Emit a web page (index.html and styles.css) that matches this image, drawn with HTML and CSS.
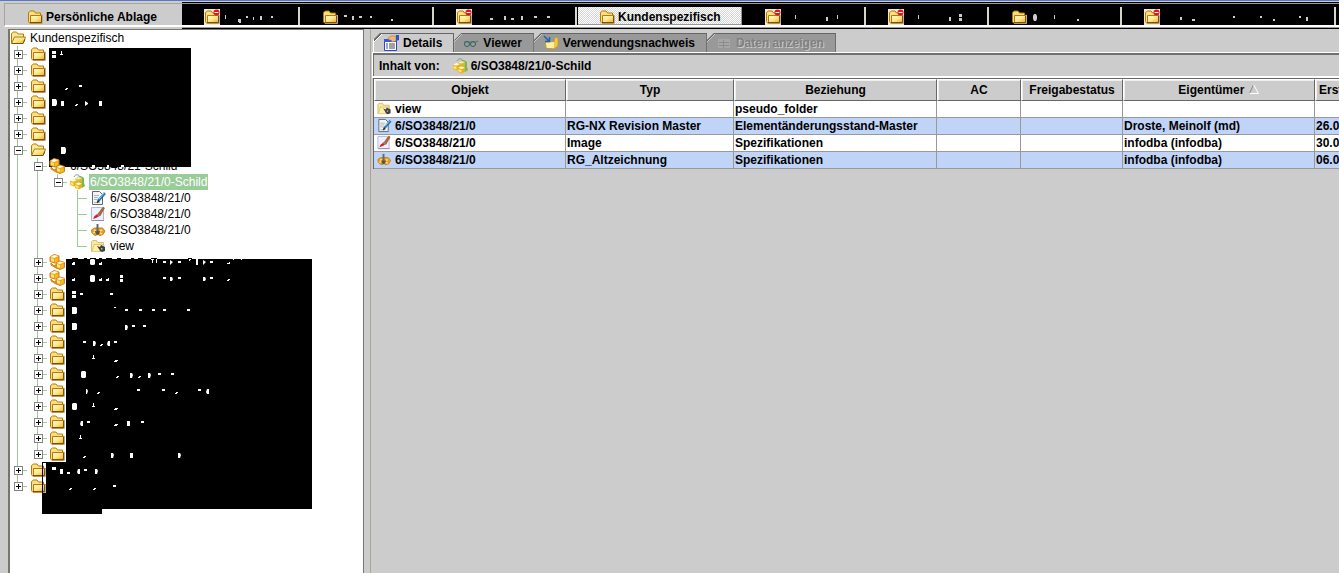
FILE: index.html
```
<!DOCTYPE html>
<html lang="de">
	<head>
		<meta charset="UTF-8">
		<title>Kundenspezifisch</title>
		<link rel="stylesheet" href="styles.css">
	</head>
	<body>
		<!-- Icons -->
		<svg class="defs" aria-hidden="true">
			<defs>
				<linearGradient id="gold" x1="0" y1="0" x2="1" y2="1">
					<stop offset="0" stop-color="#fffbd0"/>
					<stop offset="0.5" stop-color="#ffe890"/>
					<stop offset="1" stop-color="#e8ac28"/>
				</linearGradient>
			</defs>
			<symbol id="folder" viewBox="0 0 16 16">
				<path d="M3 14.5h12.5V6" fill="none" stroke="#b8b0a0"/>
				<path d="M1.500 12.500v-9l2-1.500h3.500l1.500 2h5v2h1v8h-12z" fill="#ffe080" stroke="#b87808"/>
				<path d="M3.500 6.500h11v7h-11z" fill="url(#gold)" stroke="#b87808"/>
				<path d="M3 13.500h11.500V7" fill="none" stroke="#805000"/>
			</symbol>
			<symbol id="open" viewBox="0 0 16 16">
				<path d="M1.500 13.500v-10l2-1.500h3l1.500 2h5.500v3" fill="#ffe890" stroke="#b87808"/>
				<path d="M1.500 13.500l3-6.500h11l-2.500 6.500z" fill="url(#gold)" stroke="#b87808"/>
				<path d="M2 13.500h11l2-4" fill="none" stroke="#805000"/>
			</symbol>
			<symbol id="busy" viewBox="0 0 16 16">
				<rect width="16" height="16" fill="#f0ead8"/>
				<use href="#folder"/>
				<circle cx="12.500" cy="3.500" r="3" fill="#e81020"/>
				<path d="M10.500 3.500h4" stroke="#fff"/>
			</symbol>
			<symbol id="cubes" viewBox="0 0 16 16">
				<path d="M1 3l4-2.500 5 1.500v5l-4 2-5-1.500zM7 9l4-2 4.500 1.500v5l-4.500 2-4-1.500zM2 9l3 3 2-1v3l-5-3z" fill="#f0a020" stroke="#d88020"/>
				<path d="M1.500 3l3.500-2 4.500 1-4 2zM7.500 9l3.500-1.500 4 1-4 1.500z" fill="#fffbd8"/>
				<path d="M2 4l3 1v3l-3-1zM8 10l3 1v3l-3-1z" fill="#ffe878"/>
				<path d="M6 5l3-1v3l-3 1.500zM11.500 11l3-1v3l-3 1.500z" fill="#ffc000"/>
			</symbol>
			<symbol id="rev" viewBox="0 0 16 16">
				<path d="M8 3l4-1 3 2v5l1 3-3 2-5-6z" fill="#78b850"/>
				<path d="M5 3c1-3 5-3 6 0" fill="none" stroke="#8098a0"/>
				<path d="M6 5l3-2 4 1v4l-3 2-4-1z" fill="#d8b830"/>
				<path d="M6 5l3-2 4 1-3 1.500z" fill="#e8f0b0"/>
				<path d="M1 7l3-2 4 1v5l-3 1.500-4-1.500zM6 10l3-1.500 4 1v4l-3 2-4-1.500z" fill="#e8b020"/>
				<path d="M1 7l3-2 4 1-3 1.500zM6 10l3-1.500 4 1-3 1.500z" fill="#fffde0"/>
				<path d="M1.500 8l3 .5v3l-3-1zM6.500 11l3 1v2.500l-3-1z" fill="#ffe868"/>
			</symbol>
			<symbol id="doc" viewBox="0 0 16 16">
				<path d="M2.500 1.500h7l3 3v10h-10z" fill="#f4f4f4" stroke="#606870"/>
				<path d="M4 5.500h5M4 7.500h4M4 9.500h3M4 12.500h6" stroke="#b0b4b8"/>
				<path d="M7 13l1-3.500 6-7 1.500 1.500-6 7z" fill="#2078c0" stroke="#104878" stroke-width=".5"/>
				<path d="M7 13l1-3 1.500 1.500z" fill="#222"/>
				<path d="M9 9l5-6" stroke="#90d0f8"/>
			</symbol>
			<symbol id="brush" viewBox="0 0 16 16">
				<path d="M1.500 1.500h10l2 2v11h-12z" fill="#eef0ff" stroke="#b0b8d8"/>
				<path d="M2 14.500h12" stroke="#8890b0"/>
				<path d="M8 8l5-7 1.500 1-4.500 8z" fill="#b86830" stroke="#703818" stroke-width=".5"/>
				<path d="M3 13l3-1 3.500-2-2-2-3 2z" fill="#d82018"/>
				<path d="M7 8l2.500 2" stroke="#888" stroke-width="1.500"/>
			</symbol>
			<symbol id="tool" viewBox="0 0 16 16">
				<path d="M1.500 8l3-2h8l2.500 3-2 3.500-3 1-2-1-3 1-3-2.500z" fill="#e8a020" stroke="#c88010"/>
				<path d="M4 8l2 1M3 11l2-1M12 8l-2 1M12 12l-2-1" stroke="#ffe080" stroke-width="1.500"/>
				<path d="M7.500 2v8" stroke="#606870" stroke-width="2"/>
				<path d="M5 9h5l-1 3-1.500 1-1.500-1z" fill="#605048"/>
			</symbol>
			<symbol id="view" viewBox="0 0 16 16">
				<path d="M1.500 13.500v-10l1-1h4l1 2h6v3" fill="#f8e8a0" stroke="#d8c070"/>
				<path d="M2 13.500l2-7h10l-1 7z" fill="#fff0a8" stroke="#c8b060" stroke-width=".6"/>
				<path d="M7 8l3 1 1-2 2 1 2 1v4l-3 1-2-1-1-2z" fill="#404040"/>
				<path d="M11 10h1.500v1.500H11z" fill="#bbb"/>
			</symbol>
			<symbol id="props" viewBox="0 0 16 16">
				<path d="M1.500 4.500h12v11h-12z" fill="#fff" stroke="#2848c8"/>
				<path d="M1 4h13v3H1z" fill="#3858d8"/>
				<path d="M3 9h2M3 11h2M3 13h2" stroke="#2848c8"/>
				<path d="M6 9h6M6 11h6M6 13h6" stroke="#444"/>
				<path d="M5 3l3-2 5 0v5l-4 1-1-2-2 0z" fill="#f0b878" stroke="#a06830" stroke-width=".5"/>
				<path d="M13 0h3v5l-3 1z" fill="#3050d0"/>
			</symbol>
			<symbol id="glasses" viewBox="0 0 16 16">
				<circle cx="4" cy="9" r="2.500" fill="#80a8a8" stroke="#405858"/>
				<circle cx="10" cy="9" r="2.500" fill="#80a8a8" stroke="#405858"/>
				<path d="M1 7h12l2-1" fill="none" stroke="#586868"/>
			</symbol>
			<symbol id="refs" viewBox="0 0 16 16">
				<path d="M2 6l9 1 1-5 3 1v8l-4 3-8-1z" fill="#f0c840" stroke="#c09020" stroke-width=".6"/>
				<path d="M3 8l8-1v6l-7 0z" fill="#fff0a0"/>
				<path d="M1 1l5 5M6.500 2v4.500H2" fill="none" stroke="#2060b8" stroke-width="1.500"/>
			</symbol>
			<symbol id="sheet" viewBox="0 0 16 16">
				<path d="M2 4h12v9H2z" fill="#a6a6a6"/>
				<path d="M3 7.500h10M3 10.500h10M7.500 5v8" stroke="#8c8c8c"/>
			</symbol>
		</svg>

		<div class="tabs">
			<button class="tab"><svg class="icon"><use href="#folder"/></svg>Persönliche Ablage</button>
			<div class="hidden-tabs">
				<button class="tab dark" aria-label="Ordner"><svg class="icon"><use href="#busy"/></svg><svg width="57" height="16" viewBox="223 9 57 16"><path d="M225 15h1v4h-1zM238 19h3v4h-2v-1h-1zM246 16h2v2h-2zM253 17h1v3h-1zM260 16h2v4h-2zM271 16h2v2h-2z"/></svg></button>
				<button class="tab dark" aria-label="Ordner"><svg class="icon"><use href="#folder"/></svg><svg width="73" height="16" viewBox="341 9 73 16"><path d="M344 15h3v2h-3zM352 16h2v4h-2zM359 16h3v2h-3zM370 16h2v2h-2zM391 19h2v2h-2z"/></svg></button>
				<button class="tab dark" aria-label="Ordner"><svg class="icon"><use href="#busy"/></svg><svg width="82" height="16" viewBox="475 9 82 16"><path d="M490 18h3v2h-3zM504 16h2v4h-2zM511 18h3v2h-3zM521 16h2v4h-2zM534 16h3v2h-3zM547 16h3v2h-3z"/></svg></button>
				<button class="tab current"><svg class="icon"><use href="#folder"/></svg>Kundenspezifisch</button>
				<button class="tab dark" aria-label="Ordner"><svg class="icon"><use href="#busy"/></svg><svg width="62" height="16" viewBox="784 9 62 16"><path d="M795 15h1v4h-1zM826 17h2v4h-2zM837 15h1v4h-1z"/></svg></button>
				<button class="tab dark" aria-label="Ordner"><svg class="icon"><use href="#busy"/></svg><svg width="62" height="16" viewBox="907 9 62 16"><path d="M918 15h1v4h-1zM949 17h2v4h-2zM959 14h3v3h-3zM959 18h3v3h-3z"/></svg></button>
				<button class="tab dark" aria-label="Ordner"><svg class="icon"><use href="#folder"/></svg><svg width="72" height="16" viewBox="1030 9 72 16"><path d="M1034 14h2l1 2v3l-1 2h-2l-1-2v-3zM1054 15h1v4h-1zM1077 19h2v2h-2z"/></svg></button>
				<button class="tab dark" aria-label="Ordner"><svg class="icon"><use href="#busy"/></svg><svg width="153" height="16" viewBox="1163 9 153 16"><path d="M1180 17h2v3h-2zM1192 19h3v2h-3zM1233 16h2v2h-2zM1260 16h2v2h-2zM1273 19h2v2h-2zM1299 16h2v2h-2zM1306 17h2v4h-2z"/></svg></button>
			</div>
		</div>

		<div class="main">
			<div class="tree">
				<div class="row"><svg class="icon"><use href="#open"/></svg><span class="name">Kundenspezifisch</span></div>
				<ul class="branch">
					<li><div class="row"><button class="toggle plus" aria-label="Öffnen"></button><svg class="icon"><use href="#folder"/></svg></div></li>
					<li><div class="row"><button class="toggle plus" aria-label="Öffnen"></button><svg class="icon"><use href="#folder"/></svg></div></li>
					<li><div class="row"><button class="toggle plus" aria-label="Öffnen"></button><svg class="icon"><use href="#folder"/></svg></div></li>
					<li><div class="row"><button class="toggle plus" aria-label="Öffnen"></button><svg class="icon"><use href="#folder"/></svg></div></li>
					<li><div class="row"><button class="toggle plus" aria-label="Öffnen"></button><svg class="icon"><use href="#folder"/></svg></div></li>
					<li><div class="row"><button class="toggle plus" aria-label="Öffnen"></button><svg class="icon"><use href="#folder"/></svg></div></li>
					<li>
						<div class="row"><button class="toggle" aria-label="Schließen"></button><svg class="icon"><use href="#open"/></svg></div>
						<ul class="branch">
							<li>
								<div class="row"><button class="toggle" aria-label="Schließen"></button><svg class="icon front"><use href="#cubes"/></svg><span class="name">6/SO3848/21-Schild</span></div>
								<ul class="branch">
									<li>
										<div class="row"><button class="toggle" aria-label="Schließen"></button><svg class="icon"><use href="#rev"/></svg><span class="name selected">6/SO3848/21/0-Schild</span></div>
										<ul class="branch">
											<li><div class="row leaf"><svg class="icon"><use href="#doc"/></svg><span class="name">6/SO3848/21/0</span></div></li>
											<li><div class="row leaf"><svg class="icon"><use href="#brush"/></svg><span class="name">6/SO3848/21/0</span></div></li>
											<li><div class="row leaf"><svg class="icon"><use href="#tool"/></svg><span class="name">6/SO3848/21/0</span></div></li>
											<li><div class="row leaf"><svg class="icon"><use href="#view"/></svg><span class="name">view</span></div></li>
										</ul>
									</li>
								</ul>
							</li>
							<li><div class="row"><button class="toggle plus" aria-label="Öffnen"></button><svg class="icon"><use href="#cubes"/></svg></div></li>
							<li><div class="row"><button class="toggle plus" aria-label="Öffnen"></button><svg class="icon"><use href="#cubes"/></svg></div></li>
							<li><div class="row"><button class="toggle plus" aria-label="Öffnen"></button><svg class="icon"><use href="#folder"/></svg></div></li>
							<li><div class="row"><button class="toggle plus" aria-label="Öffnen"></button><svg class="icon"><use href="#folder"/></svg></div></li>
							<li><div class="row"><button class="toggle plus" aria-label="Öffnen"></button><svg class="icon"><use href="#folder"/></svg></div></li>
							<li><div class="row"><button class="toggle plus" aria-label="Öffnen"></button><svg class="icon"><use href="#folder"/></svg></div></li>
							<li><div class="row"><button class="toggle plus" aria-label="Öffnen"></button><svg class="icon"><use href="#folder"/></svg></div></li>
							<li><div class="row"><button class="toggle plus" aria-label="Öffnen"></button><svg class="icon"><use href="#folder"/></svg></div></li>
							<li><div class="row"><button class="toggle plus" aria-label="Öffnen"></button><svg class="icon"><use href="#folder"/></svg></div></li>
							<li><div class="row"><button class="toggle plus" aria-label="Öffnen"></button><svg class="icon"><use href="#folder"/></svg></div></li>
							<li><div class="row"><button class="toggle plus" aria-label="Öffnen"></button><svg class="icon"><use href="#folder"/></svg></div></li>
							<li><div class="row"><button class="toggle plus" aria-label="Öffnen"></button><svg class="icon"><use href="#folder"/></svg></div></li>
							<li><div class="row"><button class="toggle plus" aria-label="Öffnen"></button><svg class="icon"><use href="#folder"/></svg></div></li>
						</ul>
					</li>
					<li><div class="row"><button class="toggle plus" aria-label="Öffnen"></button><svg class="icon"><use href="#folder"/></svg></div></li>
					<li><div class="row"><button class="toggle plus" aria-label="Öffnen"></button><svg class="icon"><use href="#folder"/></svg></div></li>
				</ul>

				<!-- blacked out names -->
				<svg class="mask mask-top" width="142" height="119" viewBox="49 48 142 119">
					<path fill="#000" d="M49 48h142v119h-142z"/>
					<path d="M52 51h4v3h-4zM52 55h4v3h-4zM61 51h1v3h1v1h-3v-1h1zM66 88h2v1h-1v1h-2v-1h1zM79 85h3v2h-3zM52 99h4l1 2v3l-1 2h-4zM61 101h3v5h-3zM76 104h2v1h-1v1h-2v-1h1zM85 101l3 2v1l-3 2zM99 101h3v5h-3zM61 147h4l1 2v3l-1 2h-4zM92 165h3v2h-3zM107 165h2v2h-2zM121 165h3v2h-3z"/>
				</svg>
				<svg class="mask mask-bottom" width="270" height="256" viewBox="42 258 270 256">
					<path fill="#000" d="M66 259h246v250H102v5H42v-52h24zM72 258h6v1h-6zM84 258h3v1h-3zM90 258h6v1h-6zM99 258h3v1h-3zM106 258h6v1h-6zM117 258h4v1h-4zM131 258h3v1h-3zM138 258h5v1h-5zM151 258h6v1h-6zM188 258h4v1h-4z"/>
					<path d="M43 463h3v30h-3z"/>
					<path d="M73 262h2v3h-3v-2h1zM91 259h3l1 1v4l-1 1h-3l-1-1v-4zM101 262h1v3h-3v-2h2zM151 259h3v1h-1v3h-1v-3h-1zM156 259h1v4h-1zM163 261h3v2h-3zM170 260l3 2-3 3zM178 261h3v2h-3zM189 259h2v1h-1v1h-1zM196 259h2v6h-2zM203 260l3 2-3 3zM210 261h3v2h-3zM229 262h1v2h-3v-1h2zM233 259h1v1h-1zM241 259h1v1h-1z"/>
					<path d="M74 278h1v3h-3v-2h2zM91 275h3l1 1v5l-1 1h-3l-1-1v-5zM101 278h1v3h-3v-2h2zM108 278h1v3h-3v-2h2zM120 275h3v3h-3zM120 279h3v3h-3zM163 277h3v2h-3zM170 277h2l1 2-1 2h-2zM178 277h3v2h-3zM203 277h2l1 2-1 2h-2zM210 277h3v2h-3zM228 279h2v1h-1v1h-2v-1h1z"/>
					<path d="M72 291h4v3h-4zM72 295h4v3h-4zM80 293h3v2h-3zM110 293h3v2h-3zM72 307h4l1 1v5l-1 1h-4zM114 307h2v1h-2zM125 309h3v2h-3zM139 309h3v2h-3zM152 309h3v2h-3zM163 309h3v2h-3zM187 309h3v2h-3zM72 323h4l1 1v5l-1 1h-4zM125 325h2l1 2-1 3h-2zM132 325h3v2h-3zM143 325h3v2h-3z"/>
					<path d="M83 341h3v2h-3zM93 341h2l1 2-1 3h-2zM101 344h2v1h-1v1h-2v-1h1zM110 341v5h-2l-1-2 1-3zM114 341h3v2h-3zM93 355h1v3h1v1h-3v-1h1zM115 360h3v1h-1v1h-3v-1h1zM82 371h3l1 1v5l-1 1h-3l-1-1v-5zM117 376h2v1h-1v1h-2v-1h1zM130 373h2l1 2-1 3h-2zM139 376h2v1h-1v1h-2v-1h1zM148 373h2l1 2-1 3h-2zM158 373h3v2h-3zM171 373h3v2h-3z"/>
					<path d="M86 389h1l1 2-1 3h-1zM98 392h2v1h-1v1h-2v-1h1zM137 389h3v2h-3zM162 389h3v2h-3zM176 392h2v1h-1v1h-2v-1h1zM198 389h3v2h-3zM209 389v5h-2l-1-2 1-3zM73 403h3l1 1v5l-1 1h-3l-1-1v-5zM93 403h1v3h1v1h-3v-1h1zM115 408h3v1h-1v1h-3v-1h1z"/>
					<path d="M83 421v5h-2l-1-2 1-3zM87 421h3v2h-3zM115 424h3v1h-1v1h-3v-1h1zM127 421h3v5h-3zM141 421h3v2h-3zM80 435h1v3h1v1h-3v-1h1zM84 456h2v1h-1v1h-2v-1h1zM111 453h2l1 2-1 3h-2zM130 453h3v5h-3zM178 453h2l1 2-1 3h-2z"/>
					<path d="M52 467h4v3h-4zM60 469h3v5h-3zM67 472h3v2h-3zM80 469v5h-2l-1-2 1-3zM84 469h3v2h-3zM95 469h2l1 2-1 3h-2zM70 488h2v1h-1v1h-2v-1h1zM94 488h2v1h-1v1h-2v-1h1zM113 485h3v2h-3z"/>
					<use href="#folder" x="30" y="462" width="16" height="16"/>
					<use href="#folder" x="30" y="478" width="16" height="16"/>
					<path d="M42 462h1v52h-1z" fill="#000"/>
				</svg>
			</div>

			<div class="details">
				<div class="subtabs">
					<button class="subtab active"><svg class="icon"><use href="#props"/></svg>Details</button>
					<button class="subtab"><svg class="icon"><use href="#glasses"/></svg>Viewer</button>
					<button class="subtab"><svg class="icon"><use href="#refs"/></svg>Verwendungsnachweis</button>
					<button class="subtab" disabled><svg class="icon"><use href="#sheet"/></svg>Daten anzeigen</button>
				</div>
				<div class="source">Inhalt von: <svg class="icon"><use href="#rev"/></svg><span>6/SO3848/21/0-Schild</span></div>
				<table>
					<colgroup>
						<col class="c-object"><col class="c-type"><col class="c-relation"><col class="c-ac"><col class="c-status"><col class="c-owner"><col>
					</colgroup>
					<thead>
						<tr>
							<th>Objekt</th><th>Typ</th><th>Beziehung</th><th>AC</th><th>Freigabestatus</th>
							<th>Eigentümer <svg class="sort" width="12" height="12" viewBox="0 0 12 12"><path d="M1.500 10.500l4-9" stroke="#888"/><path d="M5.500 1.500l5 9h-9" stroke="#fff"/></svg></th>
							<th>Erst</th>
						</tr>
					</thead>
					<tbody>
						<tr><td><svg class="icon"><use href="#view"/></svg>view</td><td></td><td>pseudo_folder</td><td></td><td></td><td></td><td></td></tr>
						<tr><td><svg class="icon"><use href="#doc"/></svg>6/SO3848/21/0</td><td>RG-NX Revision Master</td><td>Elementänderungsstand-Master</td><td></td><td></td><td>Droste, Meinolf (md)</td><td>26.0</td></tr>
						<tr><td><svg class="icon"><use href="#brush"/></svg>6/SO3848/21/0</td><td>Image</td><td>Spezifikationen</td><td></td><td></td><td>infodba (infodba)</td><td>30.0</td></tr>
						<tr><td><svg class="icon"><use href="#tool"/></svg>6/SO3848/21/0</td><td>RG_Altzeichnung</td><td>Spezifikationen</td><td></td><td></td><td>infodba (infodba)</td><td>06.0</td></tr>
					</tbody>
				</table>
			</div>
		</div>
	</body>
</html>
```

FILE: styles.css
```
*{
	box-sizing: border-box;
	margin: 0;
	padding: 0;
}
body{
	min-height: 100vh;
	display: flex;
	flex-direction: column;
	background: #ccc;
	border-top: 1px solid #5878c8;
	font: 12px/16px "Liberation Sans", Arial, sans-serif;
	color: #000;
	overflow: hidden;
}
ul{
	list-style: none;
}
button{
	border: 0;
	background: none;
	font: bold 12px/16px "Liberation Sans", Arial, sans-serif;
	color: #000;
}
.defs{
	position: absolute;
	width: 0;
	height: 0;
}
.icon{
	width: 16px;
	height: 16px;
	flex: none;
}

/* folder tabs */
.tabs{
	display: flex;
	padding: 1px 0 0 4px;
	height: 28px;
}
.tab{
	display: flex;
	align-items: center;
	flex: none;
	gap: 3px;
	padding: 4px 22px 0 22px;
}
.tabs > .tab{
	width: 178px;
	height: 24px;
	margin-top: 1px;
	border-top: 1px solid #a8a498;
	border-left: 1px solid #a8a498;
	border-bottom: 2px solid #fff;
}
.hidden-tabs{
	display: flex;
	flex: 1;
	min-width: 0;
	height: 25px;
	background: linear-gradient(#999, #999) 0 1px / 100% 1px no-repeat, #000;
	border-bottom: 2px solid #fff;
	box-shadow: 0 1px #999, 0 2px #000;
}
.dark{
	height: 18px;
	margin-top: 5px;
	padding: 1px 18px 0 22px;
	border-right: 2px solid #d8d4c8;
}
.dark svg{
	fill: #ccc;
}
.current{
	width: 164px;
	height: 18px;
	padding: 2px 0 0 21px;
	margin: 5px 1px 0 1px;
	border-right: 1px solid #999;
	border-bottom: 1px solid #999;
	background: repeating-conic-gradient(#fff 0 25%, #d4d4d4 0 50%) 0 0 / 2px 2px;
}

.main{
	display: flex;
	flex: 1;
}

/* tree */
.tree{
	position: relative;
	width: 356px;
	flex: none;
	margin-left: 8px;
	background: #fff;
	border-left: 2px solid #77756c;
	border-top: 1px solid #77756c;
	border-right: 1px solid #77756c;
}
.row{
	display: flex;
	align-items: center;
	height: 16px;
}
.name{
	padding: 0 1px;
	margin-left: 3px;
	white-space: nowrap;
}
.selected{
	background: #9c9;
	color: #fff;
}
.branch{
	padding-left: 4px;
}
.branch .branch{
	padding-left: 20px;
}
/* guide line, stops at the middle of the last entry */
.branch > li{
	background: linear-gradient(#9c9, #9c9) 3px 0 / 1px 100% no-repeat;
}
.branch > li:last-child{
	background-size: 1px 8px;
}
.toggle{
	width: 9px;
	height: 9px;
	flex: none;
	border: 1px solid #848484;
	background: linear-gradient(#000, #000) center / 5px 1px no-repeat, #fff;
}
.plus{
	background: linear-gradient(#000, #000) center / 5px 1px no-repeat, linear-gradient(#000, #000) center / 1px 5px no-repeat, #fff;
}
.toggle + .icon{
	margin-left: 7px;
}
.branch .branch .toggle + .icon{
	margin-left: 6px;
}
.branch .branch .toggle ~ .name{
	margin-left: 4px;
}
.row:has(.toggle){
	background: linear-gradient(#9c9, #9c9) 9px 8px / 4px 1px no-repeat;
}
.leaf{
	padding-left: 16px;
	background: linear-gradient(#9c9, #9c9) 3px 8px / 10px 1px no-repeat;
}
.front{
	position: relative;
	z-index: 2;
}
.mask{
	position: absolute;
	fill: #fff;
}
.mask-top{
	left: 39px;
	top: 18px;
}
.mask-bottom{
	left: 32px;
	top: 228px;
}

/* details */
.details{
	flex: 1;
	min-width: 0;
	margin-left: 6px;
	padding-top: 4px;
	border-left: 1px solid #a8a498;
}
.subtabs{
	display: flex;
	padding-left: 2px;
}
.subtab{
	display: flex;
	align-items: center;
	gap: 4px;
	height: 19px;
	padding: 0 11px 0 9px;
	border-top: 1px solid #666;
	border-right: 1px solid #666;
	background: linear-gradient(135deg, #666 5px, #ccc 5px, #ccc 6px, #999 6px);
	clip-path: polygon(7px 0, 100% 0, 100% 100%, 0 100%, 0 7px);
}
.active{
	border-left: 1px solid #fff;
	background: linear-gradient(135deg, #666 5px, #fff 5px, #fff 6px, #ccc 6px);
}
.subtab:disabled{
	color: #808080;
	text-shadow: 1px 1px #c8c8c8;
}
.source{
	display: flex;
	align-items: center;
	height: 26px;
	padding: 3px 0 0 6px;
	margin-left: 1px;
	border-top: 1px solid #fff;
	border-bottom: 2px solid #fff;
	border-left: 1px solid #fff;
	box-shadow: inset 1px 2px #707070;
	font-weight: bold;
}
.source .icon{
	margin: 0 3px 0 12px;
}
table{
	width: 100%;
	margin-left: 2px;
	table-layout: fixed;
	border-collapse: separate;
	border-spacing: 0;
	border-left: 1px solid #666;
	border-top: 1px solid #666;
	font-weight: bold;
}
.c-object{
	width: 192px;
}
.c-type{
	width: 168px;
}
.c-relation{
	width: 203px;
}
.c-ac{
	width: 84px;
}
.c-status{
	width: 102px;
}
.c-owner{
	width: 192px;
}
th{
	height: 22px;
	border: 1px solid #666;
	border-left-color: #fff;
	border-top-color: #fff;
	box-shadow: inset 1px 1px #eee;
	white-space: nowrap;
	overflow: hidden;
}
th:last-child{
	text-align: left;
	padding-left: 3px;
}
td{
	height: 17px;
	padding-left: 1px;
	border-right: 1px solid #999;
	border-bottom: 1px solid #999;
	background: #fff;
	white-space: nowrap;
	overflow: hidden;
}
td:first-child{
	padding-left: 2px;
}
tr:nth-child(even) td{
	background: #c0d4f8;
}
td .icon{
	height: 15px;
	margin-right: 3px;
	vertical-align: top;
}
.sort{
	fill: none;
	vertical-align: -1px;
}
```
